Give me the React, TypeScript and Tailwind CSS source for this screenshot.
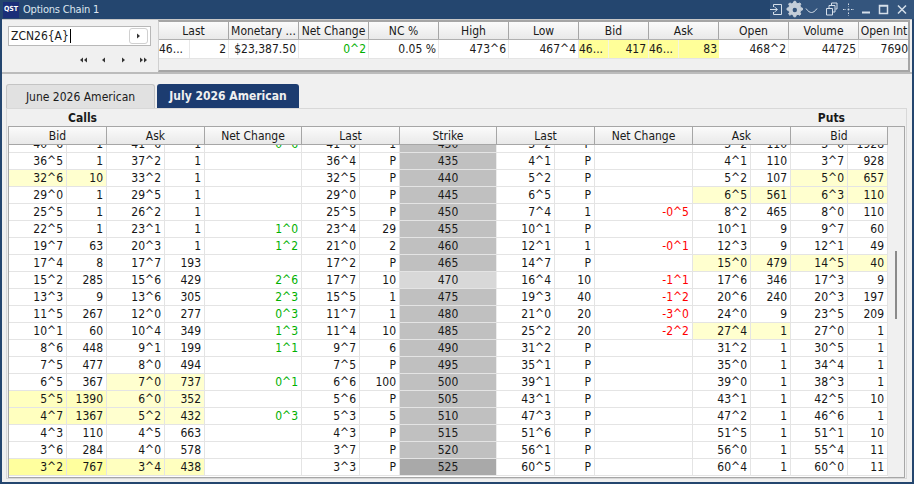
const quoteHeads = ["Last", "Monetary ...", "Net Change", "NC %", "High", "Low", "Bid", "Ask", "Open", "Volume", "Open Int"];

const majorHeads = ["Bid", "Ask", "Net Change", "Last", "Strike", "Last", "Net Change", "Ask", "Bid"];

const PALE = "bg-[#ffffcf]";
const MID = "bg-[#ffffbf]";
const STRONG = "bg-[#ffff9e]";

type Row = { c: string[]; tint?: Record<number, string>; strikeBg?: string };

const rows: Row[] = [
  { c: ["40^6", "1", "41^6", "1", "0^6", "41^6", "1", "430", "3^2", "P", "", "3^2", "110", "3^0", "1928"] },
  { c: ["36^5", "1", "37^2", "1", "", "36^4", "P", "435", "4^1", "P", "", "4^1", "110", "3^7", "928"] },
  { c: ["32^6", "10", "33^2", "1", "", "32^5", "P", "440", "5^2", "P", "", "5^2", "107", "5^0", "657"], tint: { 0: PALE, 1: PALE, 13: PALE, 14: PALE } },
  { c: ["29^0", "1", "29^5", "1", "", "29^0", "P", "445", "6^5", "P", "", "6^5", "561", "6^3", "110"], tint: { 11: PALE, 12: PALE, 13: PALE, 14: PALE } },
  { c: ["25^5", "1", "26^2", "1", "", "25^5", "P", "450", "7^4", "1", "-0^5", "8^2", "465", "8^0", "110"] },
  { c: ["22^5", "1", "23^1", "1", "1^0", "23^4", "29", "455", "10^1", "P", "", "10^1", "9", "9^7", "60"] },
  { c: ["19^7", "63", "20^3", "1", "1^2", "21^0", "2", "460", "12^1", "1", "-0^1", "12^3", "9", "12^1", "49"] },
  { c: ["17^4", "8", "17^7", "193", "", "17^2", "P", "465", "14^7", "P", "", "15^0", "479", "14^5", "40"], tint: { 11: PALE, 12: PALE, 13: PALE, 14: PALE } },
  { c: ["15^2", "285", "15^6", "429", "2^6", "17^7", "10", "470", "16^4", "10", "-1^1", "17^6", "346", "17^3", "9"], strikeBg: "bg-[#d8d8d8]" },
  { c: ["13^3", "9", "13^6", "305", "2^3", "15^5", "1", "475", "19^3", "40", "-1^2", "20^6", "240", "20^3", "197"] },
  { c: ["11^5", "267", "12^0", "277", "0^3", "11^7", "1", "480", "21^0", "20", "-3^0", "24^0", "9", "23^5", "209"] },
  { c: ["10^1", "60", "10^4", "349", "1^3", "11^4", "10", "485", "25^2", "20", "-2^2", "27^4", "1", "27^0", "1"], tint: { 11: PALE, 12: PALE } },
  { c: ["8^6", "448", "9^1", "199", "1^1", "9^7", "6", "490", "31^2", "P", "", "31^2", "1", "30^5", "1"] },
  { c: ["7^5", "477", "8^0", "494", "", "7^5", "P", "495", "35^1", "P", "", "35^0", "1", "34^4", "1"] },
  { c: ["6^5", "367", "7^0", "737", "0^1", "6^6", "100", "500", "39^1", "P", "", "39^0", "1", "38^3", "1"], tint: { 2: PALE, 3: PALE } },
  { c: ["5^5", "1390", "6^0", "352", "", "5^6", "P", "505", "43^1", "P", "", "43^1", "1", "42^5", "10"], tint: { 0: MID, 1: MID, 2: PALE, 3: PALE } },
  { c: ["4^7", "1367", "5^2", "432", "0^3", "5^3", "5", "510", "47^3", "P", "", "47^2", "1", "46^6", "1"], tint: { 0: MID, 1: MID, 2: PALE, 3: PALE } },
  { c: ["4^3", "110", "4^5", "663", "", "4^3", "P", "515", "51^6", "P", "", "51^5", "1", "51^1", "10"] },
  { c: ["3^6", "284", "4^0", "578", "", "3^7", "P", "520", "56^1", "P", "", "56^0", "1", "55^4", "11"] },
  { c: ["3^2", "767", "3^4", "438", "", "3^3", "P", "525", "60^5", "P", "", "60^4", "1", "60^0", "11"], tint: { 0: STRONG, 1: STRONG, 2: MID, 3: MID }, strikeBg: "bg-[#a9a9a9]" },
];

const TitleIcons = () => (
  <div className="ml-auto flex h-full w-[144px] items-center bg-[#34557d] text-[#d5dfea]">
    <svg width="144" height="19" viewBox="0 0 144 19" fill="none" stroke="currentColor" strokeWidth="1">
      <path d="M3.500 7v-2.500h8v10h-8v-2.500M0 9.500h7M4.500 7l3 2.500-3 2.500" />
      <path d="M24 3.500l1.600 0 .6 1.800 1.800.7 1.700-.9 1.200 1.200-.9 1.700.7 1.800 1.800.6v1.700l-1.800.6-.7 1.800.9 1.700-1.200 1.200-1.700-.9-1.800.7-.6 1.800h-1.700l-.6-1.800-1.800-.7-1.700.9-1.200-1.200.9-1.700-.7-1.800-1.800-.6v-1.700l1.800-.6.7-1.800-.9-1.700 1.200-1.200 1.700.9 1.800-.7z" transform="translate(0 -2.200)" fill="#c4ced9" stroke="#c4ced9" />
      <circle cx="24.800" cy="10" r="2.200" fill="#34557d" stroke="none" />
      <path d="M36 8.500c2 3 4 4 5.500 4s3.500-1 5.500-4" />
      <path d="M56.500 8.500h6v6.500h-6zM59 8v-2.500h6v6.500h-2M61.500 5v-2h5.500v6h-1.500" />
      <path d="M78.500 3.500v3M78.500 12.500v3M73 9.500h3M81 9.500h3" strokeDasharray="1.500 1" />
      <circle cx="78.500" cy="9.500" r="1" fill="currentColor" stroke="none" />
      <path d="M92 12.500h8" strokeWidth="2" />
      <path d="M109.500 5.500h8v8h-8z M109.500 6h8" strokeWidth="1.500" />
      <path d="M128 5.500l8 8M136 5.500l-8 8" strokeWidth="1.500" />
    </svg>
  </div>
);

const Triangle = ({ dir, double }: { dir: "l" | "r"; double?: boolean }) => {
  const one = dir === "r" ? "M0 0.500l3 2.500-3 2.500z" : "M3 0.500l-3 2.500 3 2.500z";
  return (
    <svg width="8" height="6" viewBox="0 0 8 6" fill="#333333">
      <path d={one} transform={double ? "translate(0 0)" : "translate(2 0)"} />
      {double && <path d={one} transform="translate(4 0)" />}
    </svg>
  );
};

const Cell = ({ row, i }: { row: Row; i: number }) => {
  const v = row.c[i];
  if (i === 7) {
    return (
      <div className={`flex h-[16px] items-center justify-center border-r border-[#ececec] ${row.strikeBg ?? "bg-[#c0c0c0]"}`}>{v}</div>
    );
  }
  const net = i === 4 || i === 10;
  const color = net ? (v.startsWith("-") ? "text-[#ff0000]" : "text-[#00b000]") : "text-[#161616]";
  const bg = row.tint?.[i] ?? "bg-white";
  return (
    <div className={`flex h-[16px] items-center justify-end overflow-hidden border-r border-[#e4e4e4] pr-[3px] ${bg} ${color}`}>{v}</div>
  );
};

export default function App() {
  return (
    <div
      className="flex h-[484px] w-[914px] flex-col overflow-hidden bg-[#24466f] text-[12px] leading-none text-[#1a1a1a]"
      style={{ fontFamily: '"DejaVu Sans Condensed", "Noto Sans", Tahoma, sans-serif' }}
    >
      <div className="flex h-[19px] shrink-0 items-center">
        <div className="ml-[3px] flex h-[16px] w-[16px] items-center justify-center bg-[#1a2f78] text-[7px] font-bold text-white">QST</div>
        <span className="ml-[4px] text-[11px] tracking-[-0.2px] text-[#dde6f0]">Options Chain 1</span>
        <TitleIcons />
      </div>

      <div className="mx-[2px] mb-[2px] flex min-h-0 flex-1 flex-col border-t border-[#c8c8c8] bg-[#f0f0f0]">
        <div className="flex h-[54px] shrink-0 border-b-2 border-[#bcbcbc]">
          <div className="flex w-[156px] shrink-0 flex-col pl-[6px] pt-[6px]">
            <div className="flex h-[20px] w-[143px] items-center border border-[#b8b8b8] bg-white pl-[2px]">
              <span className="border-r border-black pr-[1px] leading-[14px]">ZCN26{"{A}"}</span>
              <button className="ml-auto mr-[2px] flex h-[16px] w-[19px] items-center justify-center rounded-[3px] border border-[#d0d0d0] bg-white">
                <Triangle dir="r" />
              </button>
            </div>
            <div className="mt-[11px] flex w-[143px] justify-end gap-[12px] pr-[3px]">
              <Triangle dir="l" double />
              <Triangle dir="l" />
              <Triangle dir="r" />
              <Triangle dir="r" double />
            </div>
          </div>

          <div className="mr-[2px] flex min-w-0 flex-1 flex-col overflow-hidden border-r-2 border-b-2 border-t-2 border-l border-[#a6a6a6] border-l-[#d0d0d0]">
            <div className="grid h-[18px] shrink-0 grid-cols-[70px_70px_70px_70px_70px_70px_70px_70px_70px_70px_51px] border-b border-[#b0b0b0]">
              {quoteHeads.map((h, i) => (
                <div key={i} className="flex items-center justify-center overflow-hidden whitespace-nowrap border-r border-[#a6a6a6] bg-gradient-to-b from-[#fbfbfb] to-[#e9e9e9]">{h}</div>
              ))}
            </div>
            <div className="grid h-[19px] shrink-0 grid-cols-[30px_40px_70px_70px_70px_70px_70px_30px_40px_30px_40px_70px_70px_51px] border-b border-[#e4e4e4]">
              <div className="flex items-center bg-white">46...</div>
              <div className="flex items-center justify-end border-x border-[#e8e8e8] bg-white pr-[2px]">2</div>
              <div className="flex items-center justify-end border-r border-[#e8e8e8] bg-white pr-[2px]">$23,387.50</div>
              <div className="flex items-center justify-end border-r border-[#e8e8e8] bg-white pr-[2px] text-[#00b000]">0^2</div>
              <div className="flex items-center justify-end border-r border-[#e8e8e8] bg-white pr-[2px]">0.05 %</div>
              <div className="flex items-center justify-end border-r border-[#e8e8e8] bg-white pr-[2px]">473^6</div>
              <div className="flex items-center justify-end border-r border-[#e8e8e8] bg-white pr-[2px]">467^4</div>
              <div className="flex items-center border-r border-[#f4f4e0] bg-[#ffff99]">46...</div>
              <div className="flex items-center justify-end border-r border-[#f4f4e0] bg-[#ffff99] pr-[2px]">417</div>
              <div className="flex items-center border-r border-[#f4f4e0] bg-[#ffff99]">46...</div>
              <div className="flex items-center justify-end bg-[#ffff99] pr-[2px]">83</div>
              <div className="flex items-center justify-end border-r border-[#e8e8e8] bg-white pr-[2px]">468^2</div>
              <div className="flex items-center justify-end border-r border-[#e8e8e8] bg-white pr-[2px]">44725</div>
              <div className="flex items-center justify-end bg-white pr-[2px]">7690</div>
            </div>
          </div>
        </div>

        <div className="mt-[9px] flex h-[25px] shrink-0 items-end gap-[2px] pl-[4px]">
          <div className="flex h-[24px] w-[149px] items-center justify-center rounded-t-[3px] border border-b-0 border-[#c4c4c4] bg-[#e1e1e1]">June 2026 American</div>
          <div className="flex h-[24px] w-[142px] items-center justify-center rounded-t-[3px] bg-[#1c3c70] font-bold text-[#f0f0f0]">July 2026 American</div>
        </div>

        <div className="mb-[3px] ml-[4px] mr-[5px] flex min-h-0 flex-1 flex-col border border-[#d8d8d8] pl-[1px] pr-[1px]">
          <div className="flex h-[17px] shrink-0 items-center justify-between pl-[60px] pr-[60px] font-bold">
            <span>Calls</span>
            <span>Puts</span>
          </div>
          <div className="flex min-h-0 flex-1 border border-[#a6a6a6]">
            <div className="flex w-[879px] shrink-0 flex-col">
              <div className="grid h-[18px] shrink-0 grid-cols-[98px_98px_97px_98px_97px_98px_98px_98px_97px] border-b border-[#a6a6a6]">
                {majorHeads.map((h, i) => (
                  <div key={i} className="flex items-center justify-center border-r border-[#a6a6a6] bg-gradient-to-b from-[#fbfbfb] to-[#e9e9e9]">{h}</div>
                ))}
              </div>
              <div className="min-h-0 flex-1 overflow-hidden bg-white">
                <div className="-mt-[9px]">
                  {rows.map((r, ri) => (
                    <div key={ri} className="grid h-[17px] grid-cols-[58px_40px_58px_40px_97px_58px_40px_97px_58px_40px_98px_58px_40px_57px_40px] border-b border-[#e4e4e4]">
                      {r.c.map((_, i) => (
                        <Cell key={i} row={r} i={i} />
                      ))}
                    </div>
                  ))}
                </div>
              </div>
            </div>
            <div className="flex flex-1 justify-center bg-[#f0f0f0] pt-[124px]">
              <div className="h-[68px] w-[2px] bg-[#8a8a8a]" />
            </div>
          </div>
        </div>
      </div>
    </div>
  );
}
